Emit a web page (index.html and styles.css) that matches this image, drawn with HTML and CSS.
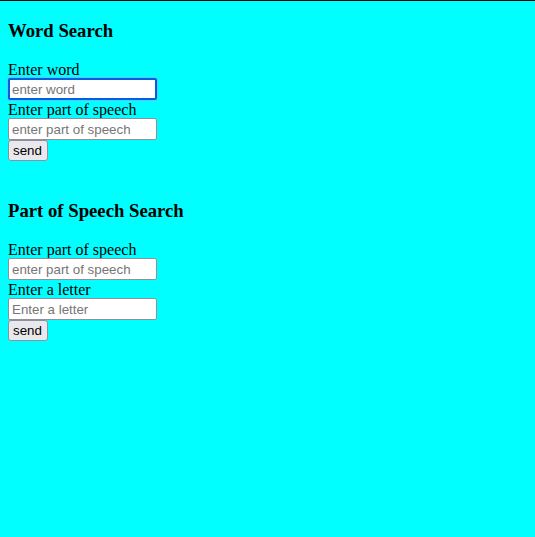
FILE: index.html
```html
<!DOCTYPE html>
<html>
<head>
<meta charset="utf-8">
<link rel="stylesheet" href="styles.css">
</head>
<body>
<div class="topline"></div>
<section class="search">
  <h3 class="title">Word Search</h3>
  <form class="form">
    <label class="label">Enter word</label>
    <input class="field field-focus" type="text" placeholder="enter word">
    <label class="label">Enter part of speech</label>
    <input class="field" type="text" placeholder="enter part of speech">
    <button class="btn" type="button">send</button>
  </form>
</section>
<section class="search">
  <h3 class="title">Part of Speech Search</h3>
  <form class="form">
    <label class="label">Enter part of speech</label>
    <input class="field" type="text" placeholder="enter part of speech">
    <label class="label">Enter a letter</label>
    <input class="field" type="text" placeholder="Enter a letter">
    <button class="btn" type="button">send</button>
  </form>
</section>
</body>
</html>
```

FILE: styles.css
```css
html {
  background: #00ffff;
}
body {
  margin: 0;
  padding: 0 8px;
  font-family: "Liberation Serif", "Times New Roman", serif;
  font-size: 16px;
  color: #000;
}
.topline {
  height: 1px;
  background: #000;
  margin: 0 -8px;
}
.search {
  display: flex;
  flex-direction: column;
}
.search + .search {
  margin-top: 20px;
}
.title {
  font-size: 18.72px;
  font-weight: bold;
  margin: 19px 0 18px;
  line-height: 22px;
}
.form {
  display: flex;
  flex-direction: column;
  align-items: flex-start;
  margin: 0;
}
.label {
  line-height: 20px;
  height: 18px;
}
.field {
  box-sizing: border-box;
  width: 149px;
  height: 22px;
  margin: 0;
  padding: 1px 3px;
  border: 1px solid #8f8f9d;
  border-radius: 2px;
  background: #fff;
  font-family: "Liberation Sans", Arial, sans-serif;
  font-size: 13.33px;
  color: #000;
}
.field::placeholder {
  color: #767676;
}
.field-focus {
  border: 2px solid #0060df;
  box-shadow: 0 0 0 1px #56c7ff;
  padding: 0 2px;
}
.btn {
  box-sizing: border-box;
  margin: 0;
  height: 21px;
  padding: 0 5px 0 4px;
  border: 1px solid #8f8f9d;
  border-radius: 3px;
  background: #e9e9ed;
  font-family: "Liberation Sans", Arial, sans-serif;
  font-size: 13.33px;
  color: #000;
}
```
